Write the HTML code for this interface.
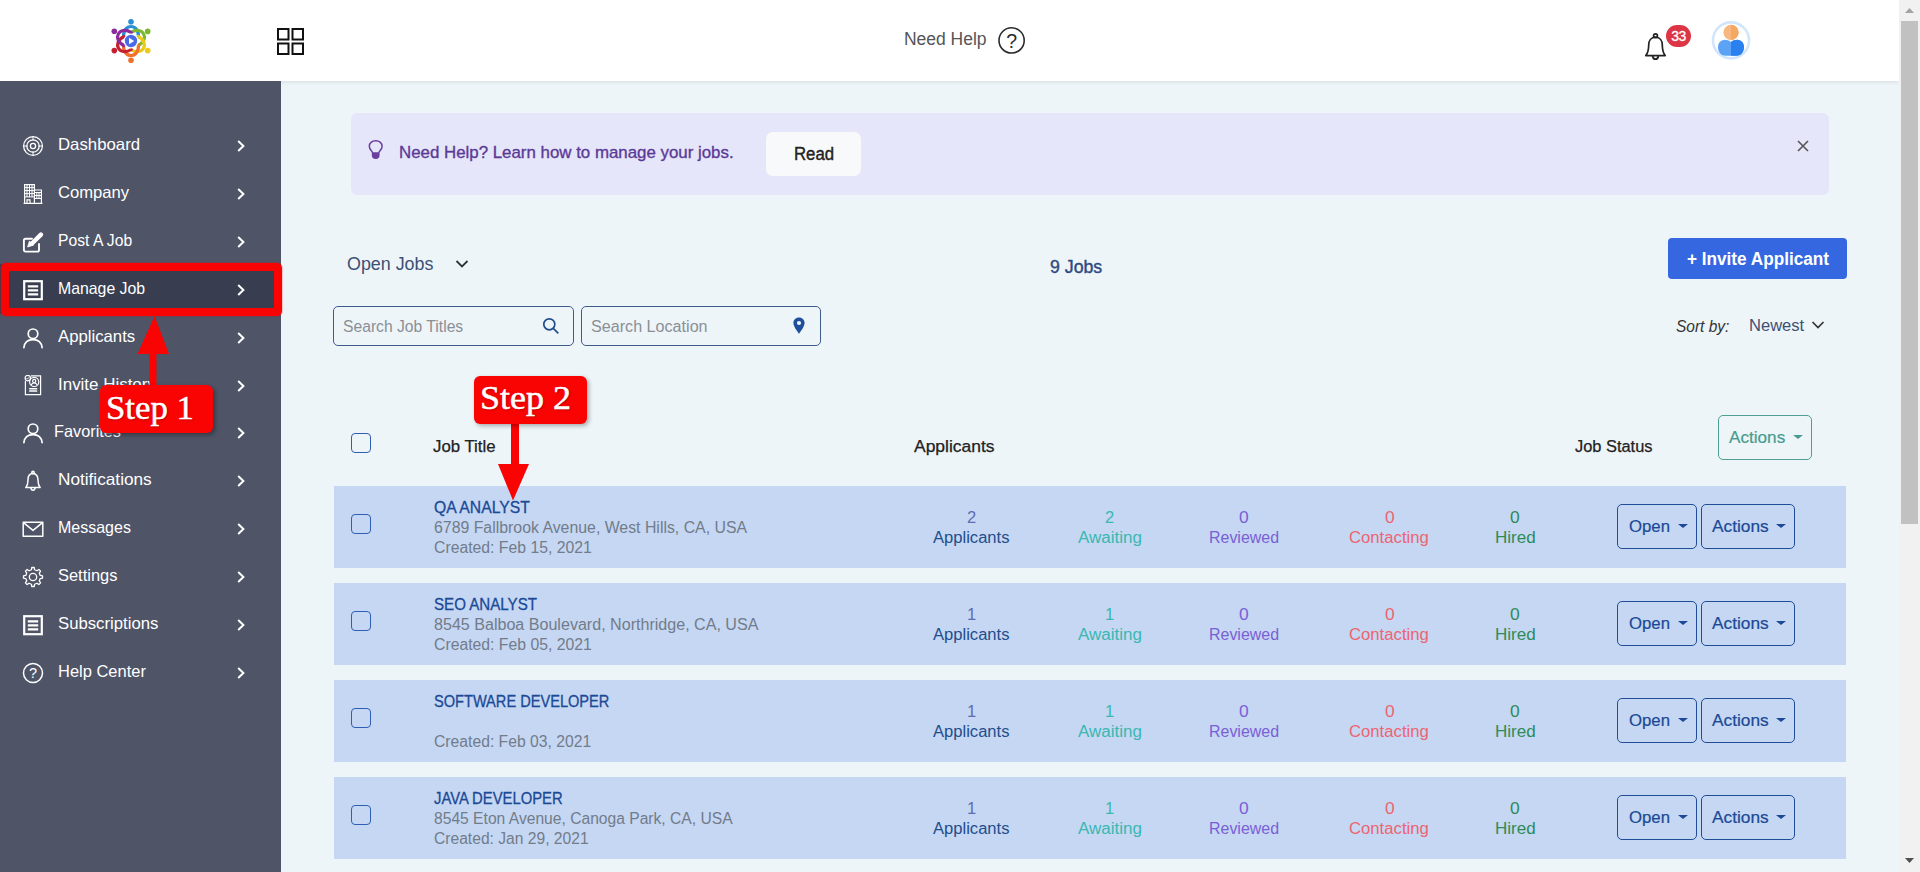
<!DOCTYPE html>
<html lang="en">
<head>
<meta charset="utf-8">
<title>Manage Jobs</title>
<style>
*{box-sizing:border-box;margin:0;padding:0}
html,body{width:1920px;height:872px;overflow:hidden;background:#eef5f9;font-family:"Liberation Sans",sans-serif;}
body{position:relative}
.abs{position:absolute}
.t{position:absolute;white-space:nowrap;line-height:20px;font-size:16px;transform-origin:0 50%}
#header{position:absolute;left:0;top:0;width:1899px;height:81px;background:#fff;box-shadow:0 1px 4px rgba(0,0,0,.1)}
#sidebar{position:absolute;left:0;top:81px;width:281px;height:791px;background:#4f5467}
#sidebar svg.ic{position:absolute;left:22px;width:22px;height:22px}
#sidebar svg.ch{position:absolute;left:235px;width:12px;height:16px}
#scroll{position:absolute;left:1899px;top:0;width:21px;height:872px;background:#f1f1f1}
#thumb{position:absolute;left:2px;top:21px;width:17px;height:502.500px;background:#c1c1c1}
.row{position:absolute;left:334px;width:1512px;height:82px;background:#c5d7f3}
.cb{position:absolute;width:20px;height:20px;border:1px solid #2f5fb3;border-radius:4px;background:#eef5f9}
.btn{position:absolute;height:45px;border:1px solid #1f4d98;border-radius:5px}
.caret{position:absolute;width:0;height:0;border-left:5px solid transparent;border-right:5px solid transparent;border-top:4.500px solid #1b4996}
</style>
</head>
<body>
<div id="header"><svg class="abs" style="left:0;top:0" width="281" height="81" viewBox="0 0 281 81"><circle cx="131.0" cy="21.7" r="2.800" fill="#2a8fd4"/><path d="M123.5 37.0 C123.0 23.0 139.0 23.0 138.5 37.0" fill="none" stroke="#2a8fd4" stroke-width="3.200" stroke-linecap="round"/><circle cx="147.7" cy="31.4" r="2.800" fill="#7cb82f"/><path d="M130.7 32.5 C142.6 25.1 150.6 38.9 138.2 45.5" fill="none" stroke="#7cb82f" stroke-width="3.200" stroke-linecap="round"/><circle cx="147.7" cy="50.6" r="2.800" fill="#ecca1c"/><path d="M138.2 36.5 C150.6 43.1 142.6 56.9 130.7 49.5" fill="none" stroke="#ecca1c" stroke-width="3.200" stroke-linecap="round"/><circle cx="131.0" cy="60.3" r="2.800" fill="#f0702c"/><path d="M138.5 45.0 C139.0 59.0 123.0 59.0 123.5 45.0" fill="none" stroke="#f0702c" stroke-width="3.200" stroke-linecap="round"/><circle cx="114.3" cy="50.6" r="2.800" fill="#c4202e"/><path d="M131.3 49.5 C119.4 56.9 111.4 43.1 123.8 36.5" fill="none" stroke="#c4202e" stroke-width="3.200" stroke-linecap="round"/><circle cx="114.3" cy="31.3" r="2.800" fill="#8b2a9c"/><path d="M123.8 45.5 C111.4 38.9 119.4 25.1 131.3 32.5" fill="none" stroke="#8b2a9c" stroke-width="3.200" stroke-linecap="round"/><circle cx="131" cy="41" r="7.400" fill="#fff"/><circle cx="131" cy="41" r="6.200" fill="#4a6be6"/><path d="M129 37.8 L134.2 41 L129 44.2Z" fill="#fff"/></svg>
<svg class="abs" style="left:276px;top:27px" width="30" height="30" viewBox="0 0 30 30" fill="none" stroke="#111" stroke-width="2"><rect x="2" y="2" width="10.500" height="10.500"/><rect x="16.500" y="2" width="10.500" height="10.500"/><rect x="2" y="16.500" width="10.500" height="10.500"/><rect x="16.500" y="16.500" width="10.500" height="10.500"/></svg>
<div class="t" id="t0" style="left:903.9px;top:28.9px;font-size:17.5px;color:#555;transform:scaleX(1.0000);">Need Help</div>
<svg class="abs" style="left:996px;top:25px" width="32" height="32" viewBox="0 0 32 32"><circle cx="15.600" cy="15.400" r="12.600" fill="none" stroke="#2b2b2b" stroke-width="1.600"/><text x="15.600" y="22.600" text-anchor="middle" font-family="Liberation Sans, sans-serif" font-size="19.500" fill="#2b2b2b">?</text></svg>
<svg class="abs" style="left:1640px;top:29px" width="32" height="36" viewBox="0 0 32 36" fill="none" stroke="#222" stroke-width="1.700" stroke-linejoin="round"><path d="M15.500 8.200c-4.400 0-6.800 3.600-6.800 7.800 0 5.600-1.300 8.600-2.900 10.600h19.400c-1.600-2-2.900-5-2.900-10.600 0-4.200-2.400-7.800-6.800-7.800z"/><circle cx="15.500" cy="6.700" r="1.900"/><path d="M12.600 27c.3 2 1.500 3.200 2.900 3.200s2.600-1.200 2.900-3.200"/></svg>
<div class="abs" style="left:1666px;top:25px;width:25px;height:22px;border-radius:11px;background:#dc3545;color:#fff;font-size:14px;-webkit-text-stroke:.3px #fff;line-height:22px;text-align:center;letter-spacing:-.6px">33</div>
<svg class="abs" style="left:1710px;top:20px" width="42" height="42" viewBox="0 0 42 42"><circle cx="21" cy="20.400" r="18" fill="#fff" stroke="#d2e5fb" stroke-width="2.600"/><clipPath id="avr"><rect x="21" y="0" width="21" height="42"/></clipPath><path id="avb" d="M21 22C19 20.600 16.500 19.700 14 19.900C10 20.200 8 23.500 8 27C8 31.500 10.500 35.700 15.500 35.700L26.500 35.700C31.500 35.700 34 31.500 34 27C34 23.500 32 20.200 28 19.900C25.500 19.700 23 20.600 21 22Z" fill="#5ca3f5"/><path d="M21 22C19 20.600 16.500 19.700 14 19.900C10 20.200 8 23.500 8 27C8 31.500 10.500 35.700 15.500 35.700L26.500 35.700C31.500 35.700 34 31.500 34 27C34 23.500 32 20.200 28 19.900C25.500 19.700 23 20.600 21 22Z" fill="#2a80ee" clip-path="url(#avr)"/><circle cx="21" cy="12.400" r="7.600" fill="#f8b77e"/><circle cx="21" cy="12.400" r="7.600" fill="#f5a862" clip-path="url(#avr)"/></svg>
</div>
<div id="sidebar"><div class="abs" style="left:0;top:183px;width:281px;height:50px;background:#383e50"></div>
<svg class="ic" style="top:54.0px" viewBox="0 0 22 22"><g fill="none" stroke="#fff" stroke-width="1.300"><circle cx="11" cy="11" r="9.400"/><circle cx="11" cy="11" r="6.200"/><circle cx="11" cy="11" r="2.600"/><path d="M11 1.600v4M11 16.400v4M1.600 11h4M16.400 11h4" stroke-width="1"/></g></svg><svg class="ch" style="top:57.0px" viewBox="0 0 12 16" fill="none" stroke="#fff" stroke-width="2"><path d="M3.200 3l5.200 5-5.200 5"/></svg>
<svg class="ic" style="top:102.0px" viewBox="0 0 22 22"><g fill="none" stroke="#fff" stroke-width="1.200"><path d="M2.600 20.400V1.600h9.800v18.800M12.400 7h7v13.400M1.600 20.400h18.800"/><path d="M5 1.600v12.500M7.500 1.600v12.500M10 1.600v12.500M2.600 4.600h9.800M2.600 7.600h9.800M2.600 10.600h9.800M2.600 13.900h9.800M14.800 9.500v6M17 9.500v6M12.400 9.500h7M12.400 12.500h7M12.400 15.500h7" stroke-width="1"/><path d="M5 20.400v-3.600h3v3.600"/></g></svg><svg class="ch" style="top:105.0px" viewBox="0 0 12 16" fill="none" stroke="#fff" stroke-width="2"><path d="M3.200 3l5.200 5-5.200 5"/></svg>
<svg class="ic" style="top:150.0px" viewBox="0 0 22 22"><g fill="none" stroke="#fff" stroke-width="1.900" stroke-linejoin="round" stroke-linecap="round"><path d="M17 13v6a1.600 1.600 0 0 1-1.600 1.600H3.500a1.600 1.600 0 0 1-1.600-1.600V9.300a1.600 1.600 0 0 1 1.600-1.600h6.500"/><path d="M18.900 3.600L10.200 12.300" stroke-width="4.400"/><path d="M7.400 10.300l-1.800 5.700 5.700-1.800z" fill="#fff" stroke-width=".8"/></g></svg><svg class="ch" style="top:153.0px" viewBox="0 0 12 16" fill="none" stroke="#fff" stroke-width="2"><path d="M3.200 3l5.200 5-5.200 5"/></svg>
<svg class="ic" style="top:198.0px" viewBox="0 0 22 22"><g fill="none" stroke="#fff" stroke-width="2.200"><rect x="2.200" y="2.200" width="17.600" height="18"/><path d="M5.800 7.400h10.400M5.800 11.400h10.400M5.800 15.400h10.400"/></g></svg><svg class="ch" style="top:201.0px" viewBox="0 0 12 16" fill="none" stroke="#fff" stroke-width="2"><path d="M3.200 3l5.200 5-5.200 5"/></svg>
<svg class="ic" style="top:246.0px" viewBox="0 0 22 22"><g fill="none" stroke="#fff" stroke-width="1.700" stroke-linecap="round"><circle cx="11" cy="6.800" r="4.800"/><path d="M1.900 20.600c.6-5.200 4.300-8 9.100-8s8.500 2.800 9.100 8"/></g></svg><svg class="ch" style="top:249.0px" viewBox="0 0 12 16" fill="none" stroke="#fff" stroke-width="2"><path d="M3.200 3l5.200 5-5.200 5"/></svg>
<svg class="ic" style="top:294.0px" viewBox="0 0 22 22"><g fill="none" stroke="#fff" stroke-width="1.200"><path d="M3.400 6v13.600h15.200V.900H9"/><circle cx="5.800" cy="3.100" r="2.700"/><path d="M4.600 3.100l.9.900 1.600-1.700" stroke-width=".9"/><circle cx="12.200" cy="6.900" r="4.600"/><circle cx="12.200" cy="5.900" r="1.600"/><path d="M9.200 10.200c.4-1.600 1.500-2.200 3-2.200s2.600.6 3 2.200"/><path d="M7.200 13.800h8M7.200 16h8" stroke-width="1.400"/></g></svg><svg class="ch" style="top:297.0px" viewBox="0 0 12 16" fill="none" stroke="#fff" stroke-width="2"><path d="M3.200 3l5.200 5-5.200 5"/></svg>
<svg class="ic" style="top:341.0px" viewBox="0 0 22 22"><g fill="none" stroke="#fff" stroke-width="1.700" stroke-linecap="round"><circle cx="11" cy="6.800" r="4.800"/><path d="M1.900 20.600c.6-5.200 4.300-8 9.100-8s8.500 2.800 9.100 8"/></g></svg><svg class="ch" style="top:344.0px" viewBox="0 0 12 16" fill="none" stroke="#fff" stroke-width="2"><path d="M3.200 3l5.200 5-5.200 5"/></svg>
<svg class="ic" style="top:389.2px" viewBox="0 0 22 22"><g fill="none" stroke="#fff" stroke-width="1.500" stroke-linejoin="round"><path d="M11 3.600c-3.400 0-5 2.900-5 6.300 0 4.200-.9 6.100-2.200 7.700h14.400c-1.300-1.600-2.200-3.500-2.200-7.700 0-3.400-1.600-6.300-5-6.300z"/><circle cx="11" cy="2.500" r="1.200"/><path d="M8.900 17.900c.2 1.500 1 2.300 2.100 2.300s1.900-.8 2.100-2.300"/></g></svg><svg class="ch" style="top:392.2px" viewBox="0 0 12 16" fill="none" stroke="#fff" stroke-width="2"><path d="M3.200 3l5.200 5-5.200 5"/></svg>
<svg class="ic" style="top:437.2px" viewBox="0 0 22 22"><g fill="none" stroke="#fff" stroke-width="1.500" stroke-linejoin="round"><rect x="1.200" y="4.200" width="19.600" height="14"/><path d="M1.500 4.600l9.500 7.800 9.500-7.800"/></g></svg><svg class="ch" style="top:440.2px" viewBox="0 0 12 16" fill="none" stroke="#fff" stroke-width="2"><path d="M3.200 3l5.200 5-5.200 5"/></svg>
<svg class="ic" style="top:485.2px" viewBox="0 0 22 22"><g fill="none" stroke="#fff" stroke-width="1.300" stroke-linejoin="round"><path d="M18.23 9.41L20.52 9.80L20.52 12.20L18.23 12.59L17.23 14.99L18.59 16.88L16.88 18.59L14.99 17.23L12.59 18.23L12.20 20.52L9.80 20.52L9.41 18.23L7.01 17.23L5.12 18.59L3.41 16.88L4.77 14.99L3.77 12.59L1.48 12.20L1.48 9.80L3.77 9.41L4.77 7.01L3.41 5.12L5.12 3.41L7.01 4.77L9.41 3.77L9.80 1.48L12.20 1.48L12.59 3.77L14.99 4.77L16.88 3.41L18.59 5.12L17.23 7.01Z"/><circle cx="11" cy="11" r="3.700"/></g></svg><svg class="ch" style="top:488.2px" viewBox="0 0 12 16" fill="none" stroke="#fff" stroke-width="2"><path d="M3.200 3l5.200 5-5.200 5"/></svg>
<svg class="ic" style="top:533.2px" viewBox="0 0 22 22"><g fill="none" stroke="#fff" stroke-width="2.200"><rect x="2.200" y="2.200" width="17.600" height="18"/><path d="M5.800 7.400h10.400M5.800 11.400h10.400M5.800 15.400h10.400"/></g></svg><svg class="ch" style="top:536.2px" viewBox="0 0 12 16" fill="none" stroke="#fff" stroke-width="2"><path d="M3.200 3l5.200 5-5.200 5"/></svg>
<svg class="ic" style="top:581.2px" viewBox="0 0 22 22"><circle cx="11" cy="11" r="9.500" fill="none" stroke="#fff" stroke-width="1.500"/><text x="11" y="16.200" text-anchor="middle" font-family="Liberation Sans, sans-serif" font-size="14.500" fill="#fff">?</text></svg><svg class="ch" style="top:584.2px" viewBox="0 0 12 16" fill="none" stroke="#fff" stroke-width="2"><path d="M3.200 3l5.200 5-5.200 5"/></svg>
</div>
<div id="sidetext"><div class="t" id="t1" style="left:58.0px;top:134.1px;font-size:16.5px;color:#fff;transform:scaleX(1.0175);">Dashboard</div>
<div class="t" id="t2" style="left:58.0px;top:182.1px;font-size:16.5px;color:#fff;transform:scaleX(1.0074);">Company</div>
<div class="t" id="t3" style="left:58.0px;top:230.1px;font-size:16.5px;color:#fff;transform:scaleX(0.9508);">Post A Job</div>
<div class="t" id="t4" style="left:58.0px;top:278.1px;font-size:16.5px;color:#fff;transform:scaleX(0.9595);">Manage Job</div>
<div class="t" id="t5" style="left:58.0px;top:326.1px;font-size:16.5px;color:#fff;transform:scaleX(1.0133);">Applicants</div>
<div class="t" id="t6" style="left:58.0px;top:374.1px;font-size:16.5px;color:#fff;transform:scaleX(1.0266);">Invite History</div>
<div class="t" id="t7" style="left:53.9px;top:421.1px;font-size:16.5px;color:#fff;transform:scaleX(0.9873);">Favorites</div>
<div class="t" id="t8" style="left:58.0px;top:469.3px;font-size:16.5px;color:#fff;transform:scaleX(1.0426);">Notifications</div>
<div class="t" id="t9" style="left:58.0px;top:517.3px;font-size:16.5px;color:#fff;transform:scaleX(0.9694);">Messages</div>
<div class="t" id="t10" style="left:58.0px;top:565.3px;font-size:16.5px;color:#fff;transform:scaleX(0.9962);">Settings</div>
<div class="t" id="t11" style="left:58.0px;top:613.3px;font-size:16.5px;color:#fff;transform:scaleX(1.0135);">Subscriptions</div>
<div class="t" id="t12" style="left:58.0px;top:661.3px;font-size:16.5px;color:#fff;transform:scaleX(0.9983);">Help Center</div>
</div>
<div id="main">
<div class="abs" style="left:351px;top:113px;width:1478px;height:82px;background:#e6e6fa;border-radius:6px"></div>
<svg class="abs" style="left:366px;top:137.300px" width="20" height="24" viewBox="0 0 20 24"><path d="M9.700 3.700c-3.900 0-6.400 2.600-6.400 5.500 0 2 .9 3.100 1.900 4.200.8.900 1.400 1.700 1.400 2.900v2.300c0 1.800 1.300 2.600 3.100 2.600s3.100-.8 3.100-2.600v-2.300c0-1.200.6-2 1.400-2.900 1-1.100 1.900-2.200 1.900-4.200 0-2.900-2.500-5.500-6.400-5.500z" fill="none" stroke="#6a3fa0" stroke-width="1.500"/><path d="M6.600 15.300h6.200v3.300c0 1.800-1.300 2.600-3.100 2.600s-3.100-.8-3.100-2.600z" fill="#6a3fa0"/></svg>
<div class="t" id="t13" style="left:399.0px;top:142.8px;font-size:17px;color:#5b3a96;transform:scaleX(0.9917);-webkit-text-stroke:.35px #5b3a96;">Need Help? Learn how to manage your jobs.</div>
<div class="abs" style="left:766px;top:132px;width:95px;height:44px;background:#f8f9fa;border-radius:7px"></div>
<div class="t" id="t14" style="left:793.8px;top:143.7px;font-size:17.5px;color:#222;transform:scaleX(0.9583);-webkit-text-stroke:.4px #222;">Read</div>
<svg class="abs" style="left:1796px;top:139px" width="14" height="14" viewBox="0 0 14 14" stroke="#555" stroke-width="1.600" fill="none"><path d="M2 2l10 10M12 2L2 12"/></svg>
<div class="t" id="t15" style="left:346.6px;top:253.6px;font-size:18.5px;color:#3d4f73;transform:scaleX(0.9655);">Open Jobs</div>
<svg class="abs" style="left:454px;top:258px" width="16" height="12" viewBox="0 0 16 12" fill="none" stroke="#333" stroke-width="1.800"><path d="M2.500 3l5.500 5.500L13.500 3"/></svg>
<div class="t" id="t16" style="left:1049.9px;top:257.4px;font-size:17.5px;color:#2d4a80;transform:scaleX(1.0124);-webkit-text-stroke:.4px #2d4a80;">9 Jobs</div>
<div class="abs" style="left:1668px;top:238px;width:179px;height:41px;background:#3567e0;border-radius:4px"></div>
<div class="t" id="t17" style="left:1686.8px;top:248.9px;font-size:17.5px;color:#fff;transform:scaleX(0.9811);font-weight:bold;">+ Invite Applicant</div>
<div class="abs" style="left:333px;top:306px;width:241px;height:40px;border:1px solid #3f5b8c;border-radius:5px"></div>
<div class="t" id="t18" style="left:343.0px;top:316.5px;font-size:16px;color:#8a8f96;transform:scaleX(0.9794);">Search Job Titles</div>
<svg class="abs" style="left:541px;top:316px" width="20" height="20" viewBox="0 0 20 20" fill="none" stroke="#1f4e8c" stroke-width="1.700"><circle cx="8.300" cy="8.300" r="5.500"/><path d="M12.300 12.300l5 5"/></svg>
<div class="abs" style="left:581px;top:306px;width:240px;height:40px;border:1px solid #3f5b8c;border-radius:5px"></div>
<div class="t" id="t19" style="left:590.7px;top:316.5px;font-size:16px;color:#8a8f96;transform:scaleX(1.0083);">Search Location</div>
<svg class="abs" style="left:791px;top:316px" width="16" height="20" viewBox="0 0 16 20"><path d="M8 1.500c-3.200 0-5.600 2.400-5.600 5.600 0 4 5.600 10.700 5.600 10.700s5.600-6.700 5.600-10.700c0-3.200-2.400-5.600-5.600-5.600z" fill="#1f4e9a"/><circle cx="8" cy="7" r="2.100" fill="#eef5f9"/></svg>
<div class="t" id="t20" style="left:1676.2px;top:316.5px;font-size:16px;color:#333;transform:scaleX(0.9684);font-style:italic;">Sort by:</div><div class="t" id="t21" style="left:1749.4px;top:315.5px;font-size:16px;color:#3d4f73;transform:scaleX(1.0345);">Newest</div>
<svg class="abs" style="left:1810px;top:319px" width="16" height="12" viewBox="0 0 16 12" fill="none" stroke="#333" stroke-width="1.700"><path d="M2.500 3l5.500 5.500L13.500 3"/></svg>
<div class="cb" style="left:351px;top:433px"></div>
<div class="t" id="t22" style="left:432.7px;top:436.5px;font-size:16px;color:#222;transform:scaleX(1.0488);-webkit-text-stroke:.25px #222;">Job Title</div><div class="t" id="t23" style="left:914.4px;top:436.5px;font-size:16px;color:#222;transform:scaleX(1.0904);-webkit-text-stroke:.25px #222;">Applicants</div><div class="t" id="t24" style="left:1575.1px;top:436.5px;font-size:16px;color:#222;transform:scaleX(1.0250);-webkit-text-stroke:.25px #222;">Job Status</div>
<div class="abs" style="left:1718px;top:415px;width:94px;height:45px;border:1px solid #4f9f92;border-radius:5px"></div>
<div class="t" id="t25" style="left:1729.2px;top:426.9px;font-size:16.5px;color:#479c8e;transform:scaleX(1.0386);-webkit-text-stroke:.2px #479c8e;">Actions</div>
<div class="caret" style="left:1792.500px;top:434.500px;border-top-color:#479c8e"></div>
<div class="row" style="top:486px"><div class="cb" style="left:17px;top:28px;background:#c5d7f3"></div><div class="btn" style="left:1283px;top:18px;width:80px"></div><div class="btn" style="left:1367px;top:18px;width:94px"></div><div class="caret" style="left:1344px;top:38px"></div><div class="caret" style="left:1442px;top:38px"></div></div>
<div class="t" id="t26" style="left:434.0px;top:497.5px;font-size:16px;color:#1b4996;transform:scaleX(0.9822);-webkit-text-stroke:.3px #1b4996;">QA ANALYST</div><div class="t" id="t27" style="left:434.0px;top:517.5px;font-size:16px;color:#727c8a;transform:scaleX(0.9908);">6789 Fallbrook Avenue, West Hills, CA, USA</div><div class="t" id="t28" style="left:434.0px;top:537.6px;font-size:16px;color:#727c8a;transform:scaleX(0.9856);">Created: Feb 15, 2021</div><div class="t" id="t29" style="left:966.9px;top:508.3px;font-size:16px;color:#5d6db5;transform:scaleX(1.0330);">2</div><div class="t" id="t30" style="left:933.4px;top:528.0px;font-size:16px;color:#1f4e8c;transform:scaleX(1.0355);">Applicants</div><div class="t" id="t31" style="left:1105.4px;top:508.3px;font-size:16px;color:#3bb8b0;transform:scaleX(1.0330);">2</div><div class="t" id="t32" style="left:1078.2px;top:528.0px;font-size:16px;color:#3bb8b0;transform:scaleX(1.0633);">Awaiting</div><div class="t" id="t33" style="left:1239.2px;top:508.3px;font-size:16px;color:#7a60d6;transform:scaleX(1.0891);">0</div><div class="t" id="t34" style="left:1209.4px;top:528.0px;font-size:16px;color:#7a60d6;transform:scaleX(0.9962);">Reviewed</div><div class="t" id="t35" style="left:1384.6px;top:508.3px;font-size:16px;color:#ec6570;transform:scaleX(1.0891);">0</div><div class="t" id="t36" style="left:1349.4px;top:528.0px;font-size:16px;color:#ec6570;transform:scaleX(1.0431);">Contacting</div><div class="t" id="t37" style="left:1510.2px;top:508.3px;font-size:16px;color:#2e8b57;transform:scaleX(1.0891);">0</div><div class="t" id="t38" style="left:1494.9px;top:528.0px;font-size:16px;color:#2e8b57;transform:scaleX(1.0645);">Hired</div><div class="t" id="t39" style="left:1628.9px;top:516.1px;font-size:16.5px;color:#1b4996;transform:scaleX(1.0142);-webkit-text-stroke:.2px #1b4996;">Open</div><div class="t" id="t40" style="left:1711.9px;top:516.1px;font-size:16.5px;color:#1b4996;transform:scaleX(1.0479);-webkit-text-stroke:.2px #1b4996;">Actions</div>
<div class="row" style="top:583px"><div class="cb" style="left:17px;top:28px;background:#c5d7f3"></div><div class="btn" style="left:1283px;top:18px;width:80px"></div><div class="btn" style="left:1367px;top:18px;width:94px"></div><div class="caret" style="left:1344px;top:38px"></div><div class="caret" style="left:1442px;top:38px"></div></div>
<div class="t" id="t41" style="left:434.0px;top:594.5px;font-size:16px;color:#1b4996;transform:scaleX(0.9443);-webkit-text-stroke:.3px #1b4996;">SEO ANALYST</div><div class="t" id="t42" style="left:434.0px;top:614.5px;font-size:16px;color:#727c8a;transform:scaleX(1.0048);">8545 Balboa Boulevard, Northridge, CA, USA</div><div class="t" id="t43" style="left:434.0px;top:634.6px;font-size:16px;color:#727c8a;transform:scaleX(0.9856);">Created: Feb 05, 2021</div><div class="t" id="t44" style="left:966.9px;top:605.3px;font-size:16px;color:#5d6db5;transform:scaleX(1.0330);">1</div><div class="t" id="t45" style="left:933.4px;top:625.0px;font-size:16px;color:#1f4e8c;transform:scaleX(1.0355);">Applicants</div><div class="t" id="t46" style="left:1105.4px;top:605.3px;font-size:16px;color:#3bb8b0;transform:scaleX(1.0330);">1</div><div class="t" id="t47" style="left:1078.2px;top:625.0px;font-size:16px;color:#3bb8b0;transform:scaleX(1.0633);">Awaiting</div><div class="t" id="t48" style="left:1239.2px;top:605.3px;font-size:16px;color:#7a60d6;transform:scaleX(1.0891);">0</div><div class="t" id="t49" style="left:1209.4px;top:625.0px;font-size:16px;color:#7a60d6;transform:scaleX(0.9962);">Reviewed</div><div class="t" id="t50" style="left:1384.6px;top:605.3px;font-size:16px;color:#ec6570;transform:scaleX(1.0891);">0</div><div class="t" id="t51" style="left:1349.4px;top:625.0px;font-size:16px;color:#ec6570;transform:scaleX(1.0431);">Contacting</div><div class="t" id="t52" style="left:1510.2px;top:605.3px;font-size:16px;color:#2e8b57;transform:scaleX(1.0891);">0</div><div class="t" id="t53" style="left:1494.9px;top:625.0px;font-size:16px;color:#2e8b57;transform:scaleX(1.0645);">Hired</div><div class="t" id="t54" style="left:1628.9px;top:613.1px;font-size:16.5px;color:#1b4996;transform:scaleX(1.0142);-webkit-text-stroke:.2px #1b4996;">Open</div><div class="t" id="t55" style="left:1711.9px;top:613.1px;font-size:16.5px;color:#1b4996;transform:scaleX(1.0479);-webkit-text-stroke:.2px #1b4996;">Actions</div>
<div class="row" style="top:680px"><div class="cb" style="left:17px;top:28px;background:#c5d7f3"></div><div class="btn" style="left:1283px;top:18px;width:80px"></div><div class="btn" style="left:1367px;top:18px;width:94px"></div><div class="caret" style="left:1344px;top:38px"></div><div class="caret" style="left:1442px;top:38px"></div></div>
<div class="t" id="t56" style="left:434.0px;top:691.5px;font-size:16px;color:#1b4996;transform:scaleX(0.9117);-webkit-text-stroke:.3px #1b4996;">SOFTWARE DEVELOPER</div><div class="t" id="t57" style="left:434.0px;top:731.6px;font-size:16px;color:#727c8a;transform:scaleX(0.9818);">Created: Feb 03, 2021</div><div class="t" id="t58" style="left:966.9px;top:702.3px;font-size:16px;color:#5d6db5;transform:scaleX(1.0330);">1</div><div class="t" id="t59" style="left:933.4px;top:722.0px;font-size:16px;color:#1f4e8c;transform:scaleX(1.0355);">Applicants</div><div class="t" id="t60" style="left:1105.4px;top:702.3px;font-size:16px;color:#3bb8b0;transform:scaleX(1.0330);">1</div><div class="t" id="t61" style="left:1078.2px;top:722.0px;font-size:16px;color:#3bb8b0;transform:scaleX(1.0633);">Awaiting</div><div class="t" id="t62" style="left:1239.2px;top:702.3px;font-size:16px;color:#7a60d6;transform:scaleX(1.0891);">0</div><div class="t" id="t63" style="left:1209.4px;top:722.0px;font-size:16px;color:#7a60d6;transform:scaleX(0.9962);">Reviewed</div><div class="t" id="t64" style="left:1384.6px;top:702.3px;font-size:16px;color:#ec6570;transform:scaleX(1.0891);">0</div><div class="t" id="t65" style="left:1349.4px;top:722.0px;font-size:16px;color:#ec6570;transform:scaleX(1.0431);">Contacting</div><div class="t" id="t66" style="left:1510.2px;top:702.3px;font-size:16px;color:#2e8b57;transform:scaleX(1.0891);">0</div><div class="t" id="t67" style="left:1494.9px;top:722.0px;font-size:16px;color:#2e8b57;transform:scaleX(1.0645);">Hired</div><div class="t" id="t68" style="left:1628.9px;top:710.1px;font-size:16.5px;color:#1b4996;transform:scaleX(1.0142);-webkit-text-stroke:.2px #1b4996;">Open</div><div class="t" id="t69" style="left:1711.9px;top:710.1px;font-size:16.5px;color:#1b4996;transform:scaleX(1.0479);-webkit-text-stroke:.2px #1b4996;">Actions</div>
<div class="row" style="top:777px"><div class="cb" style="left:17px;top:28px;background:#c5d7f3"></div><div class="btn" style="left:1283px;top:18px;width:80px"></div><div class="btn" style="left:1367px;top:18px;width:94px"></div><div class="caret" style="left:1344px;top:38px"></div><div class="caret" style="left:1442px;top:38px"></div></div>
<div class="t" id="t70" style="left:434.0px;top:788.5px;font-size:16px;color:#1b4996;transform:scaleX(0.9251);-webkit-text-stroke:.3px #1b4996;">JAVA DEVELOPER</div><div class="t" id="t71" style="left:434.0px;top:808.5px;font-size:16px;color:#727c8a;transform:scaleX(0.9768);">8545 Eton Avenue, Canoga Park, CA, USA</div><div class="t" id="t72" style="left:434.0px;top:828.6px;font-size:16px;color:#727c8a;transform:scaleX(0.9764);">Created: Jan 29, 2021</div><div class="t" id="t73" style="left:966.9px;top:799.3px;font-size:16px;color:#5d6db5;transform:scaleX(1.0330);">1</div><div class="t" id="t74" style="left:933.4px;top:819.0px;font-size:16px;color:#1f4e8c;transform:scaleX(1.0355);">Applicants</div><div class="t" id="t75" style="left:1105.4px;top:799.3px;font-size:16px;color:#3bb8b0;transform:scaleX(1.0330);">1</div><div class="t" id="t76" style="left:1078.2px;top:819.0px;font-size:16px;color:#3bb8b0;transform:scaleX(1.0633);">Awaiting</div><div class="t" id="t77" style="left:1239.2px;top:799.3px;font-size:16px;color:#7a60d6;transform:scaleX(1.0891);">0</div><div class="t" id="t78" style="left:1209.4px;top:819.0px;font-size:16px;color:#7a60d6;transform:scaleX(0.9962);">Reviewed</div><div class="t" id="t79" style="left:1384.6px;top:799.3px;font-size:16px;color:#ec6570;transform:scaleX(1.0891);">0</div><div class="t" id="t80" style="left:1349.4px;top:819.0px;font-size:16px;color:#ec6570;transform:scaleX(1.0431);">Contacting</div><div class="t" id="t81" style="left:1510.2px;top:799.3px;font-size:16px;color:#2e8b57;transform:scaleX(1.0891);">0</div><div class="t" id="t82" style="left:1494.9px;top:819.0px;font-size:16px;color:#2e8b57;transform:scaleX(1.0645);">Hired</div><div class="t" id="t83" style="left:1628.9px;top:807.1px;font-size:16.5px;color:#1b4996;transform:scaleX(1.0142);-webkit-text-stroke:.2px #1b4996;">Open</div><div class="t" id="t84" style="left:1711.9px;top:807.1px;font-size:16.5px;color:#1b4996;transform:scaleX(1.0479);-webkit-text-stroke:.2px #1b4996;">Actions</div>
</div>
<div id="ann">
<div class="abs" style="left:1px;top:263px;width:281px;height:53px;border:8px solid #fa0303;border-radius:5px;box-shadow:0 0 1.500px #fa0303"></div>
<svg class="abs" style="left:130px;top:310px" width="50" height="80" viewBox="130 310 50 80"><path d="M154.500 316L169 354H156.500V388H149.500V354H137.500Z" fill="#fa0303"/></svg>
<div class="abs" style="left:100px;top:385px;width:113px;height:48px;background:#fa0303;border-radius:6px;box-shadow:2px 2px 4px rgba(0,0,0,.35)"></div>
<svg class="abs" style="left:490px;top:420px" width="50" height="85" viewBox="490 420 50 85"><path d="M511 422H519V464H529L513 500.500L498 464H511Z" fill="#fa0303"/></svg>
<div class="abs" style="left:474px;top:376px;width:113px;height:47.500px;background:#fa0303;border-radius:6px;box-shadow:2px 2px 4px rgba(0,0,0,.3)"></div>
<div class="t" id="t85" style="left:106.0px;top:397.5px;font-size:34px;color:#fff;transform:scaleX(1.0238);font-family:'Liberation Serif',serif;-webkit-text-stroke:.5px #fff;text-shadow:1px 1px 2px rgba(0,0,0,.3);">Step 1</div><div class="t" id="t86" style="left:479.7px;top:388.4px;font-size:34px;color:#fff;transform:scaleX(1.0599);font-family:'Liberation Serif',serif;-webkit-text-stroke:.5px #fff;text-shadow:1px 1px 2px rgba(0,0,0,.3);">Step 2</div></div>
<div id="scroll"><div id="thumb"></div><svg class="abs" style="left:5px;top:7px" width="11" height="7" viewBox="0 0 11 7"><path d="M5.500 1L10 6H1z" fill="#a3a3a3"/></svg><svg class="abs" style="left:5px;top:857px" width="11" height="7" viewBox="0 0 11 7"><path d="M1 1h9L5.500 6z" fill="#505050"/></svg></div>
</body>
</html>
